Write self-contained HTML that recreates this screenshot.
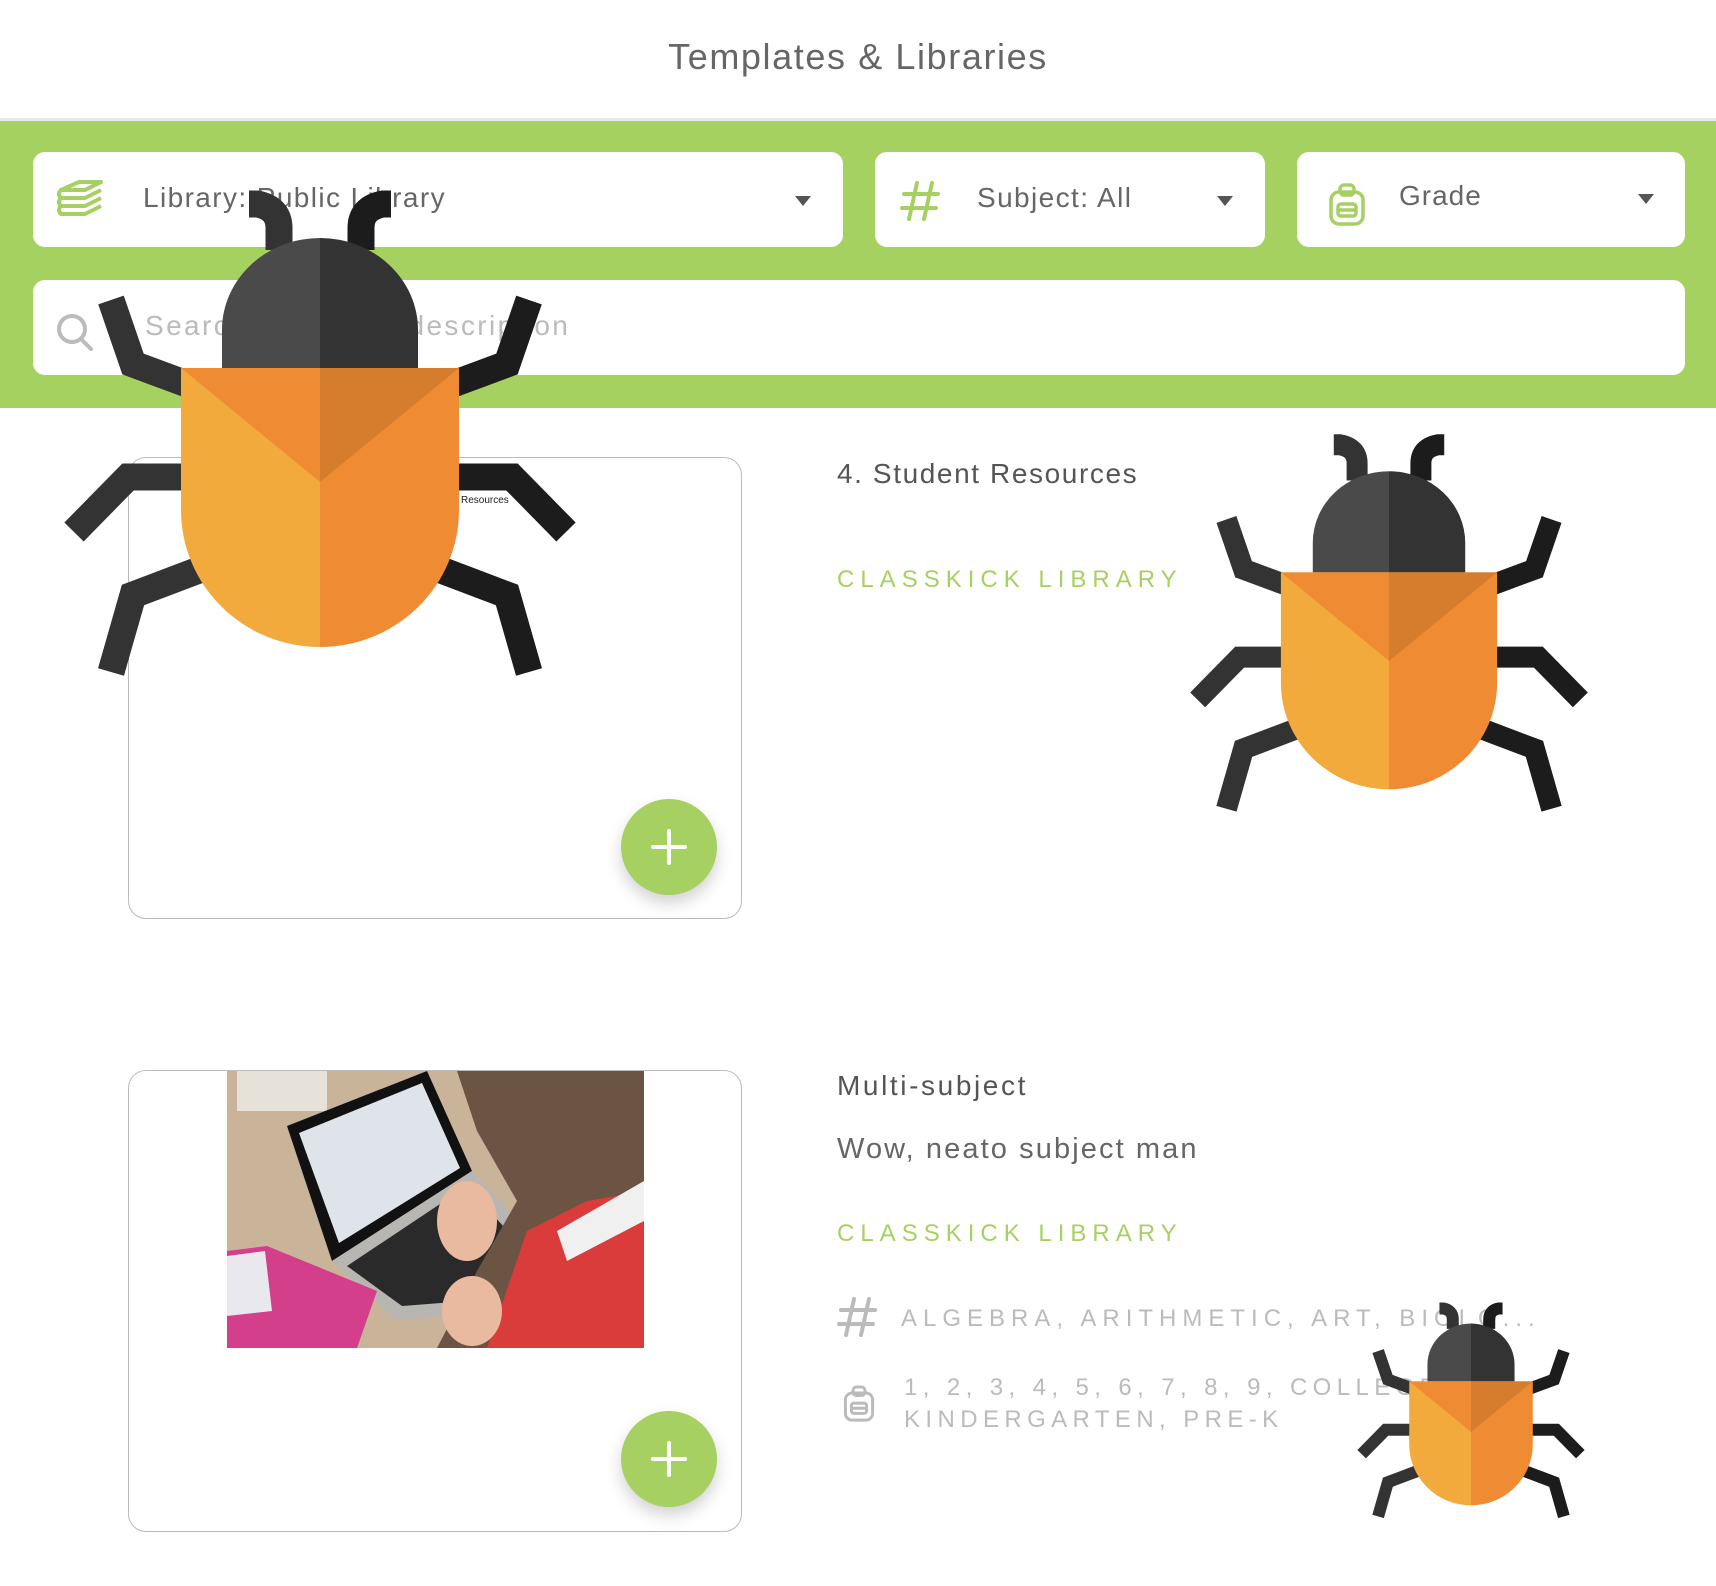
<!DOCTYPE html>
<html><head><meta charset="utf-8"><style>
*{margin:0;padding:0;box-sizing:border-box}
body{width:1716px;height:1586px;background:#fff;position:relative;overflow:hidden;font-family:"Liberation Sans",sans-serif;color:#666}
.abs{position:absolute}
.title{left:0;width:1716px;top:36px;text-align:center;font-size:36px;color:#666;letter-spacing:1.6px}
.band{left:0;top:118px;width:1716px;height:290px;background:#a5d160;border-top:3px solid #e8e8e8}
.box{background:#fff;border-radius:12px}
.dtxt{font-size:28px;color:#666;top:30px;letter-spacing:1.4px}
.caret{width:0;height:0;border-left:8px solid transparent;border-right:8px solid transparent;border-top:10px solid #555;top:44px}
.card{border:1.5px solid #bbb;border-radius:18px;background:#fff}
.plus{width:96px;height:96px;border-radius:50%;background:#a6d162;box-shadow:0 8px 16px rgba(0,0,0,.18)}
.plus:before{content:"";position:absolute;left:30px;top:46px;width:36px;height:4px;background:#fff;border-radius:2px}
.plus:after{content:"";position:absolute;left:46px;top:30px;width:4px;height:36px;background:#fff;border-radius:2px}
.h{font-size:28px;color:#555}
.lib{font-size:24px;color:#a6d162;letter-spacing:6px}
.tag{font-size:24px;color:#bbb;letter-spacing:6px}
</style></head><body>
<div class="abs title">Templates &amp; Libraries</div>
<div class="abs band"></div>

<div class="abs box" style="left:33px;top:152px;width:810px;height:95px">
 <svg class="abs" style="left:22px;top:26px" width="50" height="42" viewBox="0 0 50 42" fill="none" stroke="#a6d162" stroke-width="4" stroke-linejoin="round"><path d="M6 12 L24 4 H46 L30 12 Z"/><path d="M6 12 H30 L46 4 M6 12 Q2 16 6 20 H30 L46 12"/><path d="M6 20 Q2 24 6 28 H30 L46 20"/><path d="M6 28 Q2 32 6 36 H30 L46 28"/></svg>
 <div class="abs dtxt" style="left:110px">Library: Public Library</div>
 <div class="abs caret" style="left:762px"></div>
</div>
<div class="abs box" style="left:875px;top:152px;width:390px;height:95px">
 <svg class="abs" style="left:24px;top:28px" width="42" height="42" viewBox="0 0 42 42" stroke="#a6d162" stroke-width="4" stroke-linecap="round"><line x1="18" y1="3" x2="10" y2="39"/><line x1="33" y1="3" x2="25" y2="39"/><line x1="5" y1="14" x2="39" y2="14"/><line x1="3" y1="28" x2="37" y2="28"/></svg>
 <div class="abs dtxt" style="left:102px">Subject: All</div>
 <div class="abs caret" style="left:342px"></div>
</div>
<div class="abs box" style="left:1297px;top:152px;width:388px;height:95px">
 <svg class="abs" style="left:30px;top:30px" width="40" height="46" viewBox="0 0 40 46" fill="none" stroke="#a6d162" stroke-width="3.5"><rect x="4" y="10" width="32" height="32" rx="8"/><rect x="13" y="3" width="14" height="10" rx="4"/><rect x="11" y="22" width="18" height="12" rx="3"/><line x1="11" y1="28" x2="29" y2="28"/></svg>
 <div class="abs dtxt" style="left:102px;top:28px;letter-spacing:1px">Grade</div>
 <div class="abs caret" style="left:341px;top:42px"></div>
</div>
<div class="abs box" style="left:33px;top:280px;width:1652px;height:95px">
 <svg class="abs" style="left:22px;top:32px" width="40" height="40" viewBox="0 0 40 40" fill="none" stroke="#bbb" stroke-width="4"><circle cx="17" cy="17" r="13"/><line x1="26" y1="27" x2="36" y2="37" stroke-linecap="round"/></svg>
 <div class="abs" style="left:112px;top:30px;font-size:28px;color:#bbb;letter-spacing:2.4px">Search by title or description</div>
</div>

<div class="abs card" style="left:128px;top:457px;width:614px;height:462px">
 <div class="abs" style="left:332px;top:37px;font-size:10px;color:#222">Resources</div>
 <div class="abs plus" style="left:492px;top:341px"></div>
</div>
<div class="abs h" style="left:837px;top:458px;letter-spacing:1.6px">4. Student Resources</div>
<div class="abs lib" style="left:837px;top:566px">CLASSKICK LIBRARY</div>

<div class="abs card" style="left:128px;top:1070px;width:614px;height:462px;overflow:hidden">
 <svg class="abs" style="left:98px;top:0" width="417" height="277" viewBox="0 0 417 277">
  <rect width="417" height="277" fill="#c9b49a"/>
  <rect x="10" y="0" width="90" height="40" fill="#e6e2da"/>
  <path d="M60 55 L200 0 L245 100 L105 190 Z" fill="#111"/>
  <path d="M72 62 L195 12 L233 97 L112 172 Z" fill="#dfe3ea"/>
  <path d="M105 190 L245 100 L300 160 L250 240 L170 250 Z" fill="#b8b6b3"/>
  <path d="M120 195 L240 115 L285 165 L240 230 L175 235 Z" fill="#2a2a2a"/>
  <path d="M0 180 L40 175 L150 220 L130 277 L0 277 Z" fill="#d43f8c"/>
  <path d="M0 185 L38 180 L45 240 L0 245 Z" fill="#e8e8ee"/>
  <path d="M230 0 H417 V277 H210 L250 200 L290 130 L250 60 Z" fill="#6b5444"/>
  <path d="M260 277 L300 160 L360 130 L417 120 V277 Z" fill="#d93c3a"/>
  <path d="M330 160 L417 110 V150 L340 190 Z" fill="#f0f0f0"/>
  <ellipse cx="240" cy="150" rx="30" ry="40" fill="#e9b9a0"/>
  <ellipse cx="245" cy="240" rx="30" ry="35" fill="#e9b9a0"/>
 </svg>
 <div class="abs plus" style="left:492px;top:340px"></div>
</div>
<div class="abs h" style="left:837px;top:1070px;letter-spacing:2.6px">Multi-subject</div>
<div class="abs" style="left:837px;top:1133px;font-size:29px;color:#666;letter-spacing:2.1px">Wow, neato subject man</div>
<div class="abs lib" style="left:837px;top:1220px">CLASSKICK LIBRARY</div>
<svg class="abs" style="left:836px;top:1296px" width="42" height="42" viewBox="0 0 42 42" stroke="#bbb" stroke-width="4" stroke-linecap="round"><line x1="18" y1="3" x2="10" y2="39"/><line x1="33" y1="3" x2="25" y2="39"/><line x1="5" y1="14" x2="39" y2="14"/><line x1="3" y1="28" x2="37" y2="28"/></svg>
<div class="abs tag" style="left:901px;top:1305px">ALGEBRA, ARITHMETIC, ART, BIOLO...</div>
<svg class="abs" style="left:842px;top:1384px" width="34" height="40" viewBox="0 0 40 46" fill="none" stroke="#bbb" stroke-width="3.5"><rect x="4" y="10" width="32" height="32" rx="8"/><rect x="13" y="3" width="14" height="10" rx="4"/><rect x="11" y="22" width="18" height="12" rx="3"/><line x1="11" y1="28" x2="29" y2="28"/></svg>
<div class="abs tag" style="left:904px;top:1372px;line-height:32px;letter-spacing:5.4px">1, 2, 3, 4, 5, 6, 7, 8, 9, COLLEGE,<br>KINDERGARTEN, PRE-K</div>

<svg width="0" height="0" style="position:absolute"><defs>
<symbol id="bug" viewBox="60 185 522 495">
 <g fill="none" stroke-width="27" stroke-linejoin="miter">
  <path d="M196 387 L134 364 L112 300" stroke="#333"/>
  <path d="M196 477 L129 477 L75 532" stroke="#333"/>
  <path d="M200 570 L134 595 L112 672" stroke="#333"/>
  <path d="M446 387 L508 364 L530 300" stroke="#1c1c1c"/>
  <path d="M446 477 L513 477 L567 532" stroke="#1c1c1c"/>
  <path d="M442 570 L508 595 L530 672" stroke="#1c1c1c"/>
  <path d="M280 250 L280 228 Q280 208 258 204 L250 204" stroke="#333"/>
  <path d="M362 250 L362 228 Q362 208 384 204 L392 204" stroke="#1c1c1c"/>
 </g>
 <path d="M223 368 V330 A98 92 0 0 1 321 238 V368 Z" fill="#4a4a4a"/>
 <path d="M419 368 V330 A98 92 0 0 0 321 238 V368 Z" fill="#333"/>
 <path d="M182 368 H321 V647 A139 137 0 0 1 182 510 Z" fill="#f2aa3c"/>
 <path d="M460 368 H321 V647 A139 137 0 0 0 460 510 Z" fill="#ef8c33"/>
 <path d="M182 368 H321 V482 Z" fill="#ef8c33"/>
 <path d="M460 368 H321 V482 Z" fill="#d57d2c"/>
</symbol></defs></svg>
<svg class="abs" style="left:59px;top:185px" width="522" height="495"><use href="#bug"/></svg>
<svg class="abs" style="left:1186px;top:430px" width="406" height="385"><use href="#bug"/></svg>
<svg class="abs" style="left:1355px;top:1300px" width="232" height="220"><use href="#bug"/></svg>
</body></html>
